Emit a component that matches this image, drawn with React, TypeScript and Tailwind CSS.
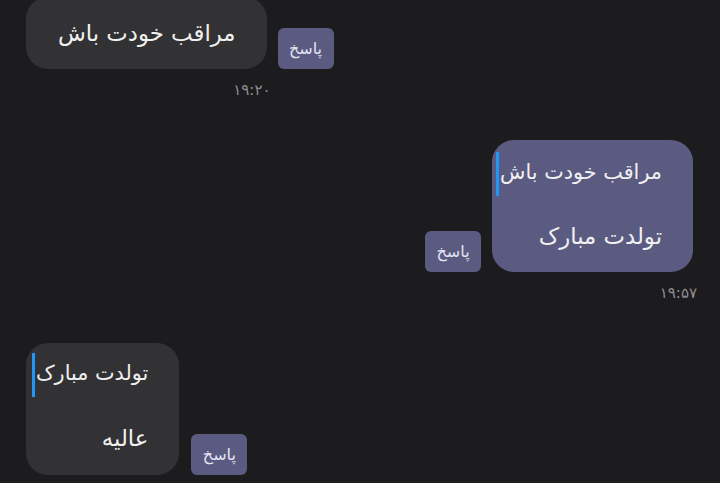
import type { ReactNode } from 'react';

const font = { fontFamily: '"DejaVu Sans", "Noto Sans", sans-serif' };

function ReplyButton() {
  return (
    <button
      dir="rtl"
      className="w-[56px] h-[41px] rounded-[6px] bg-[#5b5b82] text-[16px] text-[#e4e4f2] flex items-center justify-center shrink-0"
    >
      پاسخ
    </button>
  );
}

function Quote({ text }: { text: string }) {
  return (
    <div className="border-l-[3px] border-[#2196f3] h-[44px] flex items-center justify-end pl-[1px]">
      <span dir="rtl" className="text-[20.8px] leading-[28px] text-[#f0f0f0] whitespace-nowrap -mt-[4px]">
        {text}
      </span>
    </div>
  );
}

function Bubble({ tone, children }: { tone: 'dark' | 'purple'; children: ReactNode }) {
  return (
    <div
      className={
        tone === 'dark'
          ? 'rounded-[22px] bg-[#323133] text-[#f0f0f0]'
          : 'rounded-[22px] bg-[#5b5b82] text-[#f0f0f0]'
      }
    >
      {children}
    </div>
  );
}

function Time({ value }: { value: string }) {
  return (
    <div className="self-end -mr-1 mt-[13px] text-[15px] leading-[16px] text-[#8e8e92]">{value}</div>
  );
}

export default function App() {
  return (
    <div className="w-[720px] h-[483px] overflow-hidden bg-[#1c1b1d]" style={font}>
      {/* received: plain */}
      <div className="flex items-end gap-[11px] pl-[26px] mt-[-3px]">
        <div className="flex flex-col">
          <Bubble tone="dark">
            <div dir="rtl" className="pl-[32px] pr-[31px] py-[22px] text-[22.8px] leading-[28px] whitespace-nowrap">
              مراقب خودت باش
            </div>
          </Bubble>
          <Time value="۱۹:۲۰" />
        </div>
        <div className="mb-[29px]">
          <ReplyButton />
        </div>
      </div>

      {/* sent: with quote */}
      <div className="flex justify-end items-start gap-[11px] pr-[27px] mt-[42px]">
        <div className="mt-[91px]">
          <ReplyButton />
        </div>
        <div className="flex flex-col">
          <Bubble tone="purple">
            <div className="pl-[4px] pr-[31px] pt-[12px] pb-[22px]">
              <Quote text="مراقب خودت باش" />
              <div dir="rtl" className="mt-[26px] text-[22.8px] leading-[28px] whitespace-nowrap">
                تولدت مبارک
              </div>
            </div>
          </Bubble>
          <Time value="۱۹:۵۷" />
        </div>
      </div>

      {/* received: with quote */}
      <div className="flex items-end gap-[12px] pl-[26px] mt-[42px]">
        <Bubble tone="dark">
          <div className="pl-[6px] pr-[31px] pt-[10px] pb-[23px]">
            <Quote text="تولدت مبارک" />
            <div dir="rtl" className="mt-[27px] text-[22.8px] leading-[28px] whitespace-nowrap">
              عالیه
            </div>
          </div>
        </Bubble>
        <ReplyButton />
      </div>
    </div>
  );
}
